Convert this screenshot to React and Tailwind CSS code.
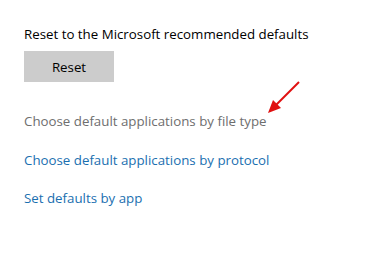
export default function App() {
  return (
    <div className="relative w-[386px] h-[265px] bg-white overflow-hidden">
      <div className="flex flex-col items-start pl-6 pt-[24px] font-['Open_Sans',sans-serif] text-[13.3px]">
        <div className="text-black leading-[20px]">Reset to the Microsoft recommended defaults</div>
        <button className="mt-[7px] w-[90px] h-[31px] bg-[#cccccc] text-black text-[13.3px] leading-[20px]">Reset</button>
        <div className="mt-[29px] text-[#6e6e6e] leading-[20px]">Choose default applications by file type</div>
        <div className="mt-[19px] text-[#1a6fb0] leading-[20px]">Choose default applications by protocol</div>
        <div className="mt-[18px] text-[#1a6fb0] leading-[20px]">Set defaults by app</div>
      </div>
      <svg className="absolute left-0 top-0" width="386" height="265">
        <line x1="299" y1="82" x2="276" y2="105" stroke="#e01010" strokeWidth="2" />
        <polygon points="268,113 273,100 281,108" fill="#e01010" />
      </svg>
    </div>
  );
}
